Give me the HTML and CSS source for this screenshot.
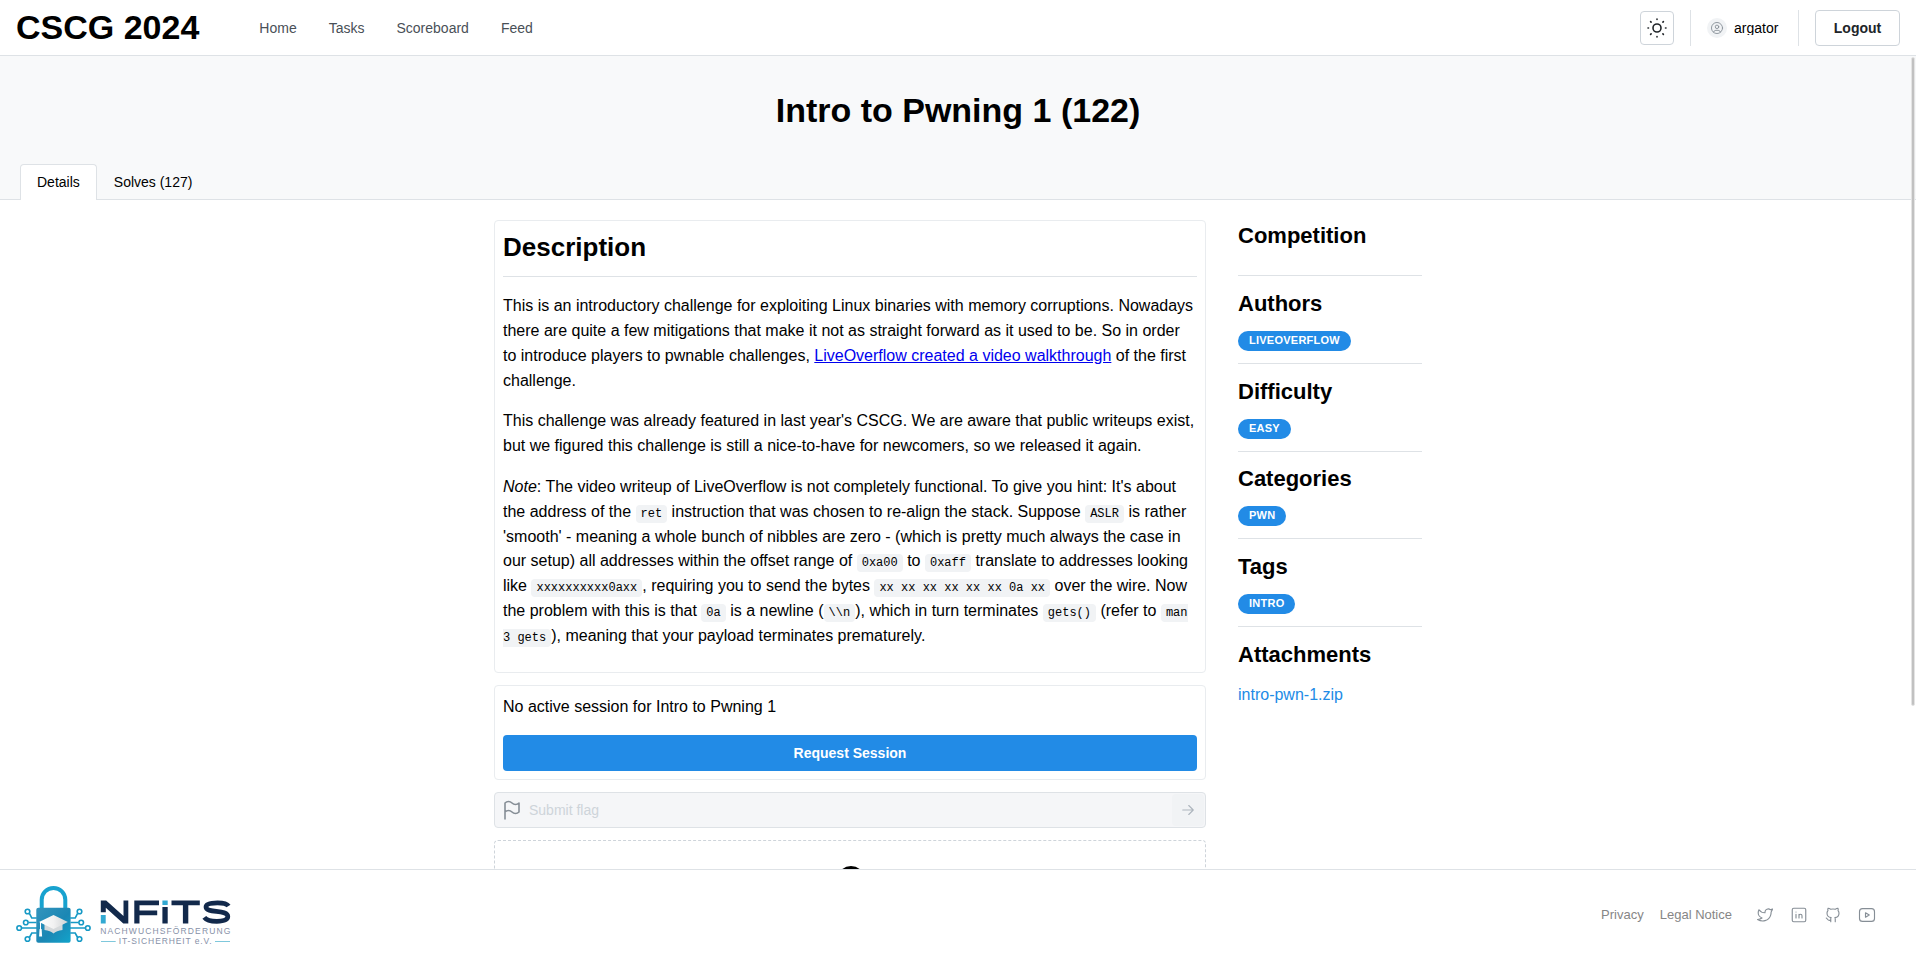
FILE: index.html
```html
<!DOCTYPE html>
<html lang="en">
<head>
<meta charset="utf-8">
<title>Intro to Pwning 1 - CSCG 2024</title>
<link rel="stylesheet" href="styles.css">
</head>
<body>
<header class="topbar">
  <h1 class="brand">CSCG 2024</h1>
  <nav class="nav"><a>Home</a><a>Tasks</a><a>Scoreboard</a><a>Feed</a></nav>
  <div class="account">
    <button class="theme" aria-label="Toggle theme">
      <svg class="icon sun" width="24" height="24" viewBox="0 0 24 24"><circle cx="12" cy="12" r="4"/><path d="M3 12h.5M12 3v.5M20.500 12h.5M12 20.500v.5M5.600 5.600l.5.5M18.400 5.600l-.5.5M17.900 17.900l.5.5M6.100 17.900l-.5.5"/></svg>
    </button>
    <span class="rule"></span>
    <div class="user">
      <span class="avatar"><svg class="icon" width="14" height="14" viewBox="0 0 24 24"><circle cx="12" cy="12" r="9.500"/><circle cx="12" cy="10" r="3"/><path d="M6.168 18.849a4 4 0 0 1 3.832-2.849h4a4 4 0 0 1 3.834 2.855"/></svg></span>
      <span class="username">argator</span>
    </div>
    <span class="rule"></span>
    <button class="logout">Logout</button>
  </div>
</header>
<main class="page">
  <section class="hero">
    <h1 class="title">Intro to Pwning 1 (122)</h1>
    <div class="tabs"><button class="tab tab-active">Details</button><button class="tab">Solves (127)</button></div>
  </section>
  <div class="content">
    <div class="column">
      <article class="card description">
        <h2>Description</h2>
        <hr>
        <p>This is an introductory challenge for exploiting Linux binaries with memory corruptions. Nowadays there are quite a few mitigations that make it not as straight forward as it used to be. So in order to introduce players to pwnable challenges, <a href="#">LiveOverflow created a video walkthrough</a> of the first challenge.</p>
        <p>This challenge was already featured in last year's CSCG. We are aware that public writeups exist, but we figured this challenge is still a nice-to-have for newcomers, so we released it again.</p>
        <p><em>Note</em>: The video writeup of LiveOverflow is not completely functional. To give you hint: It's about the address of the <code>ret</code> instruction that was chosen to re-align the stack. Suppose <code>ASLR</code> is rather 'smooth' - meaning a whole bunch of nibbles are zero - (which is pretty much always the case in our setup) all addresses within the offset range of <code>0xa00</code> to <code>0xaff</code> translate to addresses looking like <code>xxxxxxxxxx0axx</code>, requiring you to send the bytes <code>xx xx xx xx xx xx 0a xx</code> over the wire. Now the problem with this is that <code>0a</code> is a newline (<code>\\n</code>), which in turn terminates <code>gets()</code> (refer to <code>man 3 gets</code>), meaning that your payload terminates prematurely.</p>
      </article>
      <section class="card session">
        <div>No active session for Intro to Pwning 1</div>
        <button class="request">Request Session</button>
      </section>
      <div class="flag-field">
        <svg class="icon flag" width="24" height="24" viewBox="0 0 24 24"><path d="M5 5a5 5 0 0 1 7 0a5 5 0 0 0 7 0v9a5 5 0 0 1-7 0a5 5 0 0 0-7 0zM5 21V5"/></svg>
        <span class="placeholder">Submit flag</span>
        <span class="send"><svg class="icon" width="18" height="18" viewBox="0 0 24 24"><path d="M5 12h14M13 18l6-6M13 6l6 6"/></svg></span>
      </div>
      <section class="dropzone">
        <svg width="36" height="36" viewBox="0 0 36 36"><circle cx="18" cy="18" r="11.500" fill="none" stroke="#000" stroke-width="5"/></svg>
      </section>
    </div>
    <aside class="sidebar">
      <section><h3>Competition</h3></section>
      <section><h3>Authors</h3><span class="badge">LiveOverflow</span></section>
      <section><h3>Difficulty</h3><span class="badge">Easy</span></section>
      <section><h3>Categories</h3><span class="badge">Pwn</span></section>
      <section><h3>Tags</h3><span class="badge">Intro</span></section>
      <section><h3>Attachments</h3><a class="file">intro-pwn-1.zip</a></section>
    </aside>
  </div>
  <span class="scroll-thumb"></span>
</main>
<footer class="footer">
  <svg class="logo" width="218" height="62" viewBox="0 -1 218 62" role="img" aria-label="NFITS Nachwuchsförderung IT-Sicherheit e.V.">
    <defs>
      <linearGradient id="body" x1="0" y1="0" x2="1" y2="1"><stop offset="0" stop-color="#3394bd"/><stop offset=".55" stop-color="#1b87b4"/><stop offset="1" stop-color="#12a4cb"/></linearGradient>
      <linearGradient id="cap" x1="0" y1="0" x2="1" y2="0"><stop offset="0" stop-color="#fff"/><stop offset=".5" stop-color="#f2f2f2"/><stop offset="1" stop-color="#cfd2d4"/></linearGradient>
    </defs>
    <path d="M25.700 25V13.800a11.800 11.800 0 0 1 23.600 0V25" fill="none" stroke="#18a2cf" stroke-width="4"/>
    <g fill="none" stroke="#1699c5" stroke-width="1.600">
      <path d="M13.400 27.300l2.400 4.700h5M12.500 36.500h8M6 42h15M13.400 51.500l2.400-4.500h5M61.600 27.300L59.200 32h-5M62.500 36.500h-8M69 42H54M61.600 51.500L59.200 47h-5"/>
      <g fill="#fff"><circle cx="11.500" cy="25.500" r="2.300"/><circle cx="9.800" cy="36.500" r="2.300"/><circle cx="3.200" cy="42" r="2.300"/><circle cx="11.500" cy="53" r="2.300"/><circle cx="63.500" cy="25.500" r="2.300"/><circle cx="65.200" cy="36.500" r="2.300"/><circle cx="71.800" cy="42" r="2.300"/><circle cx="63.500" cy="53" r="2.300"/></g>
    </g>
    <rect x="20.300" y="21.800" width="34.300" height="35" rx="2" fill="url(#body)"/>
    <path d="M28.500 37v7c4 .8 7 1.500 9 3.500c2-2 5-2.700 9-3.500V37z" fill="#d5d9db"/>
    <path d="M37.500 29L51.900 36L37.500 43L23.100 36z" fill="url(#cap)"/>
    <path d="M24.500 36v8" stroke="#fff" stroke-width="1"/><path d="M23.600 43h2l.5 7.500h-3z" fill="#fff"/>
    <g fill="#12294b">
      <path d="M84.800 14.500h5.400L107.500 30V14.500h4.800V37.500h-5L89.800 21.700v4.500h-5z"/>
      <path d="M118.300 14.500h24.700v4.800h-19.500v5.200h17.700v4.700h-17.700v8.300h-5.200z"/>
      <path d="M146.400 21h5.300V37.500h-5.300zM155.500 14.500h28.300v4.800h-11.500v18.200h-5.400v-18.200h-11.400z"/>
    </g>
    <path d="M84.800 29h4.900v8.500h-4.900zM146.400 14.500h5.300v4.500h-5.300z" fill="#32a9d2"/>
    <path d="M212.500 20c-1.500-2.400-5.500-3.200-11-3.200c-7 0-11.500 .9-11.500 4.300c0 6.800 21.800 1.800 21.800 9.500c0 4-5 4.700-11 4.700c-6 0-10.300-1-12.500-4" fill="none" stroke="#12294b" stroke-width="4.700"/>
    <text x="84.300" y="48.300" class="logo-line" textLength="130">NACHWUCHSFÖRDERUNG</text>
    <text x="102.700" y="58" class="logo-line" textLength="93">IT-SICHERHEIT e.V.</text>
    <path d="M85 55.500h14.700M199 55.500h15" stroke="#7fc8dc" stroke-width="1"/>
  </svg>
  <nav class="legal"><a>Privacy</a><a>Legal Notice</a></nav>
  <div class="social">
    <svg class="icon" width="18" height="18" viewBox="0 0 24 24"><path d="M22 4.010c-1 .49-1.980.689-3 .99c-1.121-1.265-2.783-1.335-4.380-.737S11.977 6.323 12 8v1c-3.245.083-6.135-1.395-8-4c0 0-4.182 7.433 4 11c-1.872 1.247-3.739 2.088-6 2c3.308 1.803 6.913 2.423 10.034 1.517c3.580-1.040 6.522-3.723 7.651-7.742a13.840 13.840 0 0 0 .497-3.753c0-.249 1.510-2.772 1.818-4.013z"/></svg>
    <svg class="icon" width="18" height="18" viewBox="0 0 24 24"><rect x="3" y="3" width="18" height="18" rx="2"/><path d="M8 11v5M8 8v.01M12 16v-5M16 16v-3a2 2 0 0 0-4 0"/></svg>
    <svg class="icon" width="18" height="18" viewBox="0 0 24 24"><path d="M9 19c-4.300 1.400-4.300-2.500-6-3m12 5v-3.500c0-1 .1-1.400-.5-2c2.800-.3 5.500-1.400 5.500-6a4.600 4.600 0 0 0-1.300-3.200a4.200 4.200 0 0 0-.1-3.200s-1.100-.3-3.500 1.300a12.300 12.300 0 0 0-6.200 0C6.500 2.800 5.400 3.100 5.400 3.100a4.200 4.200 0 0 0-.1 3.200A4.600 4.600 0 0 0 4 9.500c0 4.600 2.700 5.700 5.500 6c-.6.600-.6 1.200-.5 2V21"/></svg>
    <svg class="icon" width="18" height="18" viewBox="0 0 24 24"><rect x="2" y="3.500" width="20" height="17" rx="4"/><path d="M10 9l5 3l-5 3z"/></svg>
  </div>
</footer>
</body>
</html>
```
FILE: styles.css
```css
* { box-sizing: border-box; }
body {
  margin: 0;
  height: 959px;
  display: flex;
  flex-direction: column;
  overflow: hidden;
  font: 16px/1.55 "Liberation Sans", Arial, sans-serif;
  color: #000;
  background: #fff;
}
h1, h2, h3, p { margin: 0; }
button { font-family: inherit; }
svg { display: block; flex: none; }
.icon { fill: none; stroke: currentColor; stroke-width: 1.5; stroke-linecap: round; stroke-linejoin: round; }

.topbar {
  height: 56px;
  flex: none;
  display: flex;
  align-items: center;
  padding: 0 16px;
  border-bottom: 1px solid #dee2e6;
}
.brand { font-size: 34px; line-height: 1.3; }
.nav { display: flex; gap: 32px; margin-left: 60px; padding-top: 2px; font-size: 14px; color: #495057; }
.account { display: flex; align-items: center; margin-left: auto; gap: 16px; }
.theme {
  width: 34px;
  height: 34px;
  padding: 0;
  display: grid;
  place-items: center;
  color: #212529;
  background: #fff;
  border: 1px solid #ced4da;
  border-radius: 4px;
}
.sun { stroke-width: 1.6; }
.rule { width: 1px; height: 36px; background: #dee2e6; }
.user { display: flex; align-items: center; gap: 7px; }
.avatar {
  width: 20px;
  height: 20px;
  display: grid;
  place-items: center;
  border-radius: 50%;
  background: #f1f3f5;
  color: #868e96;
}
.username { font-size: 14px; line-height: 14px; overflow: hidden; width: 48px; }
.logout {
  height: 36px;
  width: 85px;
  padding: 0;
  font-size: 14px;
  font-weight: 600;
  color: #212529;
  background: #fff;
  border: 1px solid #ced4da;
  border-radius: 4px;
}

.page { flex: 1; min-height: 0; overflow: hidden; position: relative; }
.hero {
  height: 144px;
  display: flex;
  flex-direction: column;
  justify-content: space-between;
  padding: 32px 20px 0;
  background: #f8f9fa;
  border-bottom: 1px solid #dee2e6;
}
.title { font-size: 34px; line-height: 1.3; text-align: center; }
.tabs { display: flex; margin-bottom: -1px; }
.tab {
  height: 36px;
  padding: 0 16px 1px;
  font-size: 14px;
  color: #000;
  background: transparent;
  border: 1px solid transparent;
  border-bottom: 0;
  border-radius: 4px 4px 0 0;
}
.tab-active { background: #fff; border-color: #dee2e6; }

.content { width: 928px; margin: 20.2px auto 0; display: flex; gap: 32px; }
.column { width: 712px; display: flex; flex-direction: column; gap: 12px; }
.card { border: 1px solid #e9ecef; border-radius: 4px; padding: 8px; }
.description h2 { font-size: 26px; line-height: 35.1px; padding-top: .7px; }
.description hr { border: 0; border-top: 1px solid #dee2e6; margin: 11.5px 0 16.8px; }
.description p { margin-bottom: 16px; }
.description p:last-child { margin-bottom: 15.5px; }
.description a { color: #00e; }
.description code {
  font: 12px/1.55 "Liberation Mono", monospace;
  padding: 2px 5px;
  border-radius: 4px;
  background: #f1f3f5;
}
.session { display: flex; flex-direction: column; gap: 15.2px; padding-top: 8.8px; }
.request {
  height: 36px;
  border: 0;
  border-radius: 4px;
  background: #228be6;
  color: #fff;
  font-size: 14px;
  font-weight: 600;
}
.flag-field {
  height: 36px;
  display: flex;
  align-items: center;
  padding: 0 1px 0 5px;
  border: 1px solid #dee2e6;
  border-radius: 4px;
  background: #f5f6f8;
}
.flag { color: #868e96; stroke-width: 1.6; }
.placeholder { margin-left: 5px; padding-top: 1px; font-size: 14px; color: #ced4da; }
.send {
  width: 32px;
  height: 32px;
  margin-left: auto;
  display: grid;
  place-items: center;
  border-radius: 4px;
  background: #f1f3f5;
  color: #adb5bd;
}
.dropzone {
  height: 160px;
  display: flex;
  justify-content: center;
  padding: 21px 0 0 2px;
  border: 1px dashed #ced4da;
  border-radius: 4px;
}

.sidebar { width: 184px; }
.sidebar section {
  display: flex;
  flex-direction: column;
  align-items: flex-start;
  gap: 12px;
  padding-bottom: 12px;
  margin-bottom: 12px;
  border-bottom: 1px solid #dee2e6;
}
.sidebar section:first-child { padding-bottom: 24px; }
.sidebar section:last-child { border: 0; }
.sidebar h3 { font-size: 22px; line-height: 1.4; padding-top: .8px; margin-bottom: -.8px; }
.badge {
  height: 20px;
  padding: 0 11px;
  border-radius: 32px;
  background: #228be6;
  color: #fff;
  font-size: 11px;
  font-weight: 700;
  line-height: 18px;
  letter-spacing: .25px;
  text-transform: uppercase;
}
.file { color: #228be6; padding-top: .8px; }
.scroll-thumb {
  position: absolute;
  top: 1px;
  right: 1px;
  width: 4px;
  height: 649px;
  border: 1px solid #e4e4e4;
  border-radius: 2px;
  background: #c1c1c1;
}

.footer {
  height: 90px;
  flex: none;
  display: flex;
  align-items: center;
  padding: 2px 40px 0 16px;
  border-top: 1px solid #dee2e6;
  background: #fff;
}
.logo-line { font: 8.5px "Liberation Sans", Arial, sans-serif; fill: #8791a8; }
.legal { display: flex; gap: 16px; margin-left: auto; font-size: 13px; color: #868686; }
.social { display: flex; gap: 16px; margin: 0 0 1px 24px; color: #868e96; }
```
